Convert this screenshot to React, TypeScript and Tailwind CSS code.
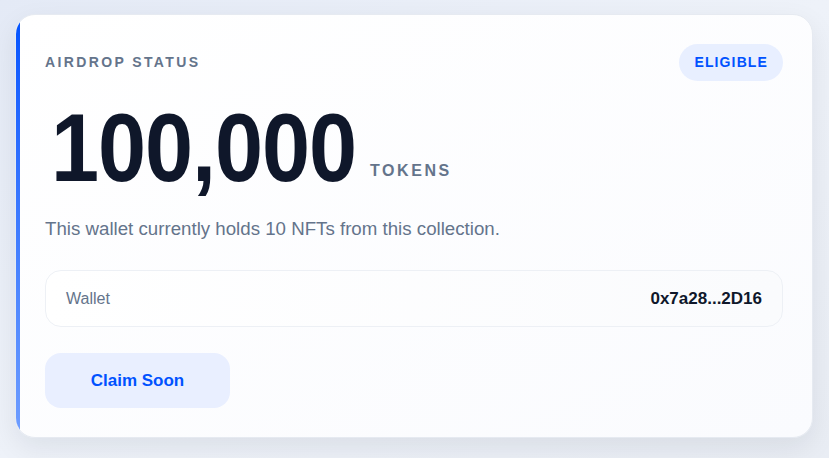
import React from "react";

const wallet = "0x7a28...2D16";

export default function App() {
  return (
    <div className="min-h-screen w-full bg-gradient-to-br from-[#e4eaf6] via-[#eef2f9] to-[#e9edf4] pl-[15px] pr-[16px] pt-[14px] pb-[21px] font-['Liberation_Sans',Arial,sans-serif]">
      {/* Card */}
      <div className="relative w-[798px] overflow-hidden rounded-[20px] border border-[#e6eaf1] bg-gradient-to-br from-white to-[#fafbfe] p-[29px] shadow-[0_10px_28px_rgba(15,23,42,0.08)]">
        {/* accent bar */}
        <div className="absolute inset-y-0 left-0 w-[4px] bg-gradient-to-b from-[#0052ff] to-[#6f9dff]" />

        <div className="flex h-[37px] items-center justify-between">
          <span className="text-[14px] font-bold uppercase tracking-[0.17em] text-[#64748b]">
            Airdrop Status
          </span>
          <span className="flex h-[37px] items-center rounded-full bg-[#e8efff] px-[15px] text-[14px] font-bold uppercase tracking-[0.08em] text-[#0052ff]">
            Eligible
          </span>
        </div>

        <div className="mt-[19px] flex items-end gap-[14px]">
          <div className="w-[311px] shrink-0 whitespace-nowrap">
            <span className="ml-[6px] inline-block origin-left scale-x-90 text-[96px] font-bold leading-none tracking-[-0.012em] text-[#0f172a]">
              100,000
            </span>
          </div>
          <span className="mb-[13px] text-[16px] font-bold uppercase leading-6 tracking-[0.16em] text-[#64748b]">
            Tokens
          </span>
        </div>

        <p className="mt-[19px] text-[18.7px] leading-7 text-[#64748b]">
          This wallet currently holds 10 NFTs from this collection.
        </p>

        <div className="mt-[27px] flex h-[57px] items-center justify-between rounded-[16px] border border-[#edf0f5] bg-gradient-to-r from-white to-[#fafbfd] px-[20px]">
          <span className="text-[16px] text-[#64748b]">Wallet</span>
          <span className="text-[17px] font-bold text-[#0f172a]">{wallet}</span>
        </div>

        <button className="mt-[26px] flex h-[55px] w-[185px] items-center justify-center rounded-[16px] bg-[#e9efff] text-[17px] font-bold text-[#0052ff]">
          Claim Soon
        </button>
      </div>
    </div>
  );
}
